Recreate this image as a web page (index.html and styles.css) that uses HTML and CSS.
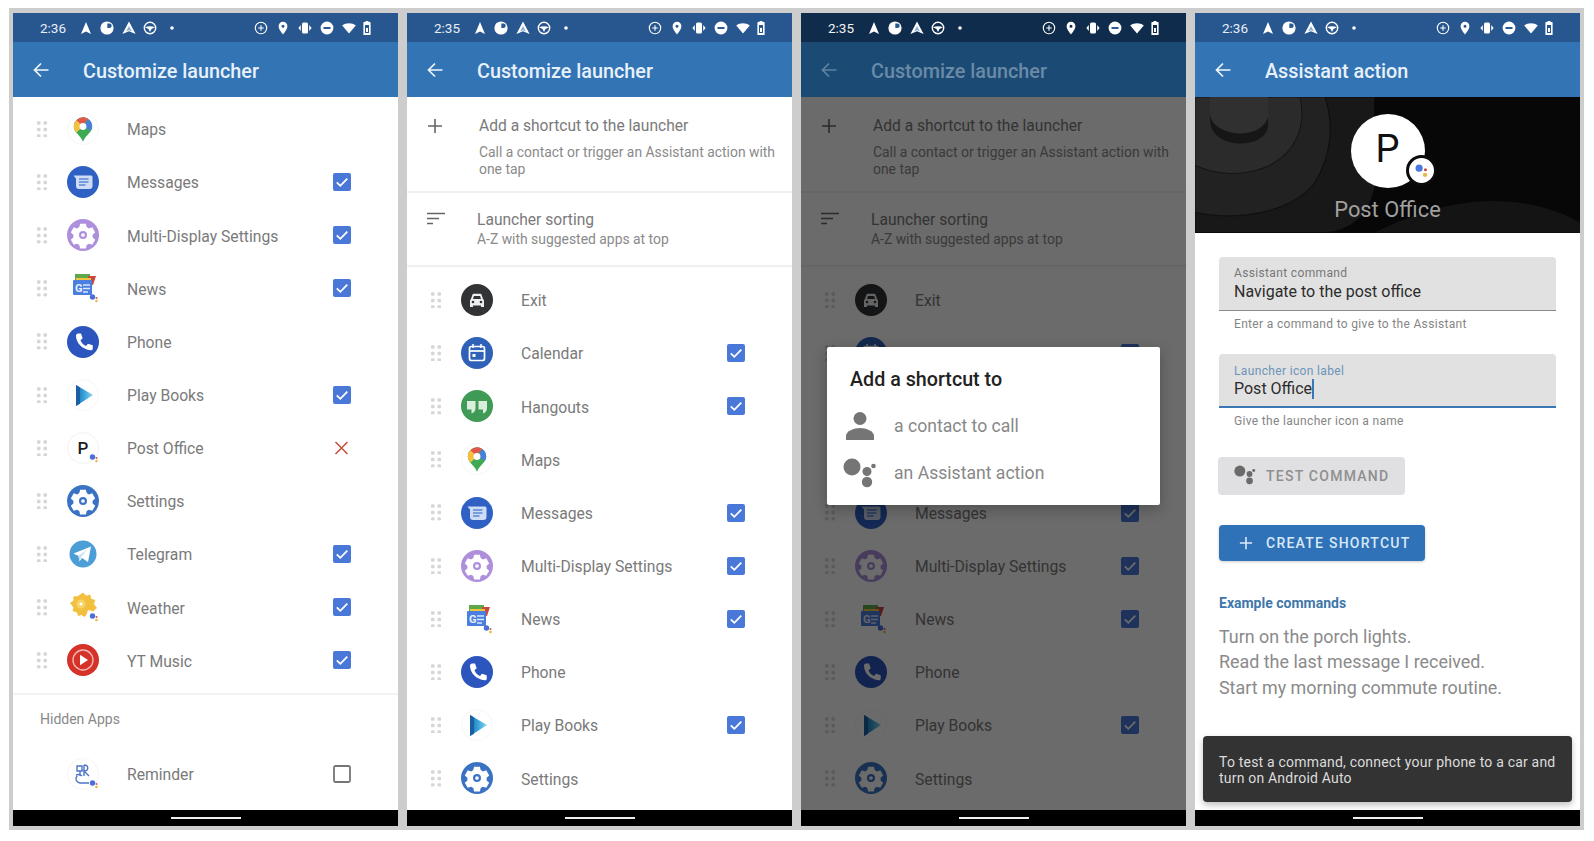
FILE: index.html
```html
<!DOCTYPE html>
<html lang="en">
<head>
<meta charset="utf-8">
<title>Customize launcher</title>
<link rel="stylesheet" href="styles.css">
</head>
<body>
<svg class="defs" aria-hidden="true">
  <defs>
    <linearGradient id="books" x1="0" x2="1" y1="0" y2="0"><stop offset="0" stop-color="#1f6fb0"/><stop offset=".45" stop-color="#35a0d8"/><stop offset="1" stop-color="#8ad8ee"/></linearGradient>
  </defs>
  <symbol id="s-nav" viewBox="0 0 14 14"><path d="M7 1l5 12-5-2.4L2 13z" fill="#fff"/></symbol>
  <symbol id="s-g" viewBox="0 0 14 14"><circle cx="7" cy="7" r="6.6" fill="#fff"/><path d="M7.3 2.6h2.2a2 2 0 0 1 0 4.4H7.3z" fill="#2a5a94"/></symbol>
  <symbol id="s-tri" viewBox="0 0 14 14"><path d="M7 .5l6.6 12.5L7 10.2.4 13z" fill="#fff"/><path d="M7 5l3 5.6L7 9.3l-3 1.3z" fill="#8fb0d2"/></symbol>
  <symbol id="s-wheel" viewBox="0 0 14 14"><circle cx="7" cy="7" r="5.7" fill="none" stroke="#fff" stroke-width="1.4"/><path d="M2 6.2c3-1.4 7-1.4 10 0L8.5 8 7 11 5.5 8z" fill="#fff"/></symbol>
  <symbol id="s-dot" viewBox="0 0 14 14"><circle cx="7" cy="7" r="1.8" fill="#fff"/></symbol>
  <symbol id="s-plusc" viewBox="0 0 14 14"><circle cx="7" cy="7" r="5.7" fill="none" stroke="#fff" stroke-width="1.1"/><path d="M7 4.2v5.6M4.2 7h5.6" stroke="#fff" stroke-width="1.1"/></symbol>
  <symbol id="s-pin" viewBox="0 0 14 14"><path fill-rule="evenodd" d="M7 .8a4.4 4.4 0 0 1 4.4 4.4C11.400 8.400 7 13.400 7 13.400S2.600 8.400 2.600 5.200A4.400 4.400 0 0 1 7 .8zM7 3.700a1.500 1.500 0 1 0 0 3 1.500 1.500 0 0 0 0-3z" fill="#fff"/></symbol>
  <symbol id="s-vib" viewBox="0 0 14 14"><rect x="4" y="1.500" width="6" height="11" rx="1.500" fill="#fff"/><path d="M2.800 4v6L.4 7zM11.200 4v6l2.400-3z" fill="#fff"/></symbol>
  <symbol id="s-dnd" viewBox="0 0 14 14"><circle cx="7" cy="7" r="6.400" fill="#fff"/><rect x="3.500" y="6" width="7" height="2" fill="#2a5a94"/></symbol>
  <symbol id="s-wifi" viewBox="0 0 14 14"><path d="M7 12.500L.2 4.600C4 1.500 10 1.500 13.800 4.600z" fill="#fff"/></symbol>
  <symbol id="s-bat" viewBox="0 0 8 14"><path fill-rule="evenodd" d="M2.500 1V0h3v1H7a.6.6 0 0 1 .6.600V13.400a.6.6 0 0 1-.6.600H1a.6.6 0 0 1-.6-.6V1.600A.6.6 0 0 1 1 1zM2 4v8h4V4z" fill="#fff"/><rect x="3" y="7" width="2" height="4" fill="#fff"/></symbol>

  <symbol id="back" viewBox="0 0 16 16"><path d="M15.500 8H2M8 1.500L1.500 8 8 14.500" fill="none" stroke="currentColor" stroke-width="1.700"/></symbol>
  <symbol id="handle" viewBox="0 0 10 16"><g fill="#d6d6d6"><rect x="0" y="0" width="3.500" height="3.500" rx="1"/><rect x="6.500" y="0" width="3.500" height="3.500" rx="1"/><rect x="0" y="6.500" width="3.500" height="3.500" rx="1"/><rect x="6.500" y="6.500" width="3.500" height="3.500" rx="1"/><rect x="0" y="13" width="3.500" height="3.500" rx="1"/><rect x="6.500" y="13" width="3.500" height="3.500" rx="1"/></g></symbol>
  <symbol id="check" viewBox="0 0 18 18"><rect width="18" height="18" rx="2" fill="#4a78d9"/><path d="M3.800 9.300l3.500 3.500 7-7.200" fill="none" stroke="#fff" stroke-width="1.800"/></symbol>
  <symbol id="cross" viewBox="0 0 18 18"><path d="M2.500 3l12 12M14.500 3l-12 12" stroke="#c4513f" stroke-width="1.600" fill="none"/></symbol>
  <symbol id="empty" viewBox="0 0 18 18"><rect x="1" y="1" width="16" height="16" rx="1.500" fill="none" stroke="#757575" stroke-width="1.800"/></symbol>
  <symbol id="badge" viewBox="0 0 32 32"><circle cx="25.500" cy="25" r="2.700" fill="#4a6fd8"/><circle cx="29.500" cy="26" r="1" fill="#d9533f"/><circle cx="29.500" cy="29" r="1.300" fill="#f1b63c"/></symbol>

  <symbol id="i-maps" viewBox="0 0 32 32"><circle cx="16" cy="16" r="16" fill="#fff"/><circle cx="16" cy="16" r="15.500" fill="none" stroke="#f6f6f6"/><g transform="translate(16 16.500) scale(1.080) translate(-16 -16.250)"><path d="M16 5a8.500 8.500 0 0 1 8.500 8.500c0 5.500-6 8-8.500 14-2.500-6-8.500-8.500-8.500-14A8.500 8.500 0 0 1 16 5z" fill="#3eaa56"/><path d="M9.900 7.600A8.500 8.500 0 0 1 16 5c1.800 0 3.500.6 4.900 1.600L10 17.500c-1.600-2-2.500-3-2.500-4A8 8 0 0 1 9.900 7.600z" fill="#e2574a"/><path d="M7.500 13.500c0-2 .8-4.200 2.400-5.900L16 13.500 10 19c-1.500-2-2.500-3.500-2.500-5.500z" fill="#f4c23c"/><path d="M20.900 6.600a8.500 8.500 0 0 1 3.600 6.900c0 1.500-.5 2.700-1.200 4L16 13.500z" fill="#4a7fd9"/><circle cx="16" cy="13.500" r="3.200" fill="#fff"/></g></symbol>
  <symbol id="i-messages" viewBox="0 0 32 32"><circle cx="16" cy="16" r="16" fill="#2f61c4"/><path d="M8 9.500h16a1.500 1.500 0 0 1 1.500 1.500v9a3 3 0 0 1-3 3H12a3 3 0 0 1-3-3v-7.500L6.800 10a.3.3 0 0 1 .2-.5z" fill="#cfdcf6"/><path d="M12 13h9.500M12 16h9.500M12 19h6.500" stroke="#5c86d6" stroke-width="1.300"/></symbol>
  <symbol id="gear" viewBox="0 0 32 32"><g transform="translate(16 16) scale(1.080) translate(-16 -16.500)"><path fill-rule="evenodd" d="M13.300 6h5.400l.7 3.200 2.100 1.200 3.100-1 2.700 4.700-2.400 2.200v2.400l2.400 2.200-2.700 4.700-3.100-1-2.100 1.200-.7 3.200h-5.400l-.7-3.200-2.100-1.200-3.100 1-2.700-4.700 2.400-2.200v-2.400l-2.400-2.200 2.700-4.700 3.100 1 2.100-1.200zM16 12.800a3.700 3.700 0 1 0 0 7.400 3.700 3.700 0 0 0 0-7.400z" fill="#fff"/><circle cx="16" cy="16.500" r="1.700" fill="#fff"/></g></symbol>
  <symbol id="i-news" viewBox="0 0 32 32"><circle cx="16" cy="16" r="16" fill="#fff"/><rect x="8" y="2" width="15" height="9" fill="#5fa84a"/><path d="M21 4h8l-3 9h-5z" fill="#c9473d"/><path d="M9 6h15v4H9z" fill="#f2c33f"/><rect x="6" y="8" width="19" height="15" rx="1" fill="#4a7fe0"/><path d="M16 13h7M16 16.500h7M16 20h5" stroke="#dbe6fa" stroke-width="1.300"/></symbol>
  <symbol id="i-phone" viewBox="0 0 32 32"><circle cx="16" cy="16" r="16" fill="#2c55bd"/><path d="M11 7.500l3 .1 1.700 4.700-2.200 1.900c.8 2.500 2.900 4.700 5.500 5.700l2-2.200 4.700 1.600.1 3.200c0 1-1 1.900-2 1.800C15 23.500 9 17 9 9.600c0-1.100 1-2.100 2-2.100z" fill="#fff"/></symbol>
  <symbol id="i-books" viewBox="0 0 32 32"><circle cx="16" cy="16" r="16" fill="#fff"/><circle cx="16" cy="16" r="15.500" fill="none" stroke="#f6f6f6"/><path d="M9 6l17 10L9 27z" fill="url(#books)"/><path d="M9 6l4 2.400v16.300L9 27z" fill="#1b5fa3"/></symbol>
  <symbol id="i-post" viewBox="0 0 32 32"><circle cx="16" cy="16" r="16" fill="#fff"/><circle cx="16" cy="16" r="15.500" fill="none" stroke="#f2f2f2"/></symbol>
  <symbol id="i-telegram" viewBox="0 0 32 32"><circle cx="16" cy="16" r="16" fill="#fff"/><circle cx="16" cy="16" r="13.500" fill="#4b9ed6"/><path d="M6.500 15.500L24 8.500 21 24l-6-4-2.500 3.500-1-5.500z" fill="#fff"/><path d="M11.500 18L20 11.500 14 19l-1.500 4.500z" fill="#c4dff2"/></symbol>
  <symbol id="i-weather" viewBox="0 0 32 32"><circle cx="16" cy="16" r="16" fill="#fff"/><path d="M16 1.500l3 3.200 4.200-1.100 1 4.200 4 1.300-1.200 4.100L30 17l-3 2.400-.5 3-6 .5-3 3-3-1.800-3.500 1-1-3.600-4.500-1.400 1-3.700L3 12l3.500-2.500-.2-4 4.400-.3z" fill="#f2bf3e"/><circle cx="14" cy="13" r="4.500" fill="#f7d569"/><circle cx="14" cy="13" r="1.500" fill="#fff"/><path d="M21 19l8 2-2 9-9-2z" fill="#fff"/></symbol>
  <symbol id="i-yt" viewBox="0 0 32 32"><circle cx="16" cy="16" r="16" fill="#d5332a"/><circle cx="16" cy="16" r="10" fill="none" stroke="#f4b8b3" stroke-width="1.400"/><path d="M13 10.800l8 5.200-8 5.200z" fill="#fff"/></symbol>
  <symbol id="i-reminder" viewBox="0 0 32 32"><circle cx="16" cy="16" r="16" fill="#fff"/><circle cx="16" cy="16" r="15.500" fill="none" stroke="#f4f4f4"/><path d="M10 8h5v5h-5zM17 7c5 0 5 6 0 6l5 5M17 7v11M9 17c3-1 5 0 6 1M10 18c-2 3-1 6 3 7h9M13 13v5" fill="none" stroke="#4f74c8" stroke-width="1.400"/></symbol>
  <symbol id="i-exit" viewBox="0 0 32 32"><circle cx="16" cy="16" r="16" fill="#313335"/><path d="M10 15l1.400-4.300c.2-.6.700-.9 1.300-.9h6.600c.6 0 1.100.3 1.300.9L22 15a2 2 0 0 1 1 1.700V23h-3v-1.500h-8V23H9v-6.300A2 2 0 0 1 10 15z" fill="#eee"/><path d="M12 15l.9-3h6.200l.9 3z" fill="#313335"/><circle cx="12" cy="18" r="1.300" fill="#313335"/><circle cx="20" cy="18" r="1.300" fill="#313335"/></symbol>
  <symbol id="i-calendar" viewBox="0 0 32 32"><circle cx="16" cy="16" r="16" fill="#2f61b8"/><rect x="8.500" y="9.500" width="15" height="14" rx="2" fill="none" stroke="#fff" stroke-width="1.700"/><path d="M8.500 14h15" stroke="#fff" stroke-width="1.700"/><path d="M12 7v4M20 7v4" stroke="#fff" stroke-width="1.500"/><rect x="11.500" y="17" width="3" height="3" fill="#fff"/></symbol>
  <symbol id="i-hangouts" viewBox="0 0 32 32"><circle cx="16" cy="16" r="16" fill="#3f9a55"/><path d="M6 11h8.500v7c0 3-1.700 5-4 5.500v-4H6zM17.500 11H26v7c0 3-1.700 5-4 5.500v-4h-4.500z" fill="#d9eedd"/></symbol>
  <symbol id="assist" viewBox="0 0 34 30"><circle cx="9" cy="9" r="8.500" fill="currentColor"/><circle cx="24" cy="13.500" r="4.500" fill="currentColor"/><circle cx="30.500" cy="8" r="2.300" fill="currentColor"/><circle cx="24" cy="24" r="5.200" fill="currentColor"/></symbol>
</svg>

<main class="frame">

  <section class="phone">
    <div class="status">
      <span class="time">2:36</span>
      <svg class="si"><use href="#s-nav"/></svg><svg class="si"><use href="#s-g"/></svg><svg class="si"><use href="#s-tri"/></svg><svg class="si"><use href="#s-wheel"/></svg><svg class="si"><use href="#s-dot"/></svg>
      <svg class="si push"><use href="#s-plusc"/></svg><svg class="si"><use href="#s-pin"/></svg><svg class="si"><use href="#s-vib"/></svg><svg class="si"><use href="#s-dnd"/></svg><svg class="si"><use href="#s-wifi"/></svg><svg class="si-bat"><use href="#s-bat"/></svg>
    </div>
    <header class="appbar"><svg class="back"><use href="#back"/></svg><h1>Customize launcher</h1></header>
    <div class="content">
      <ul class="list">
        <li class="row"><svg class="handle"><use href="#handle"/></svg><svg class="app"><use href="#i-maps"/></svg><span class="label">Maps</span></li>
        <li class="row"><svg class="handle"><use href="#handle"/></svg><svg class="app"><use href="#i-messages"/></svg><span class="label">Messages</span><svg class="box"><use href="#check"/></svg></li>
        <li class="row"><svg class="handle"><use href="#handle"/></svg><svg class="app multi"><circle cx="16" cy="16" r="16"/><use href="#gear"/></svg><span class="label">Multi-Display Settings</span><svg class="box"><use href="#check"/></svg></li>
        <li class="row"><svg class="handle"><use href="#handle"/></svg><svg class="app"><use href="#i-news"/><text class="news-g" x="8" y="20">G</text><use href="#badge"/></svg><span class="label">News</span><svg class="box"><use href="#check"/></svg></li>
        <li class="row"><svg class="handle"><use href="#handle"/></svg><svg class="app"><use href="#i-phone"/></svg><span class="label">Phone</span></li>
        <li class="row"><svg class="handle"><use href="#handle"/></svg><svg class="app"><use href="#i-books"/></svg><span class="label">Play Books</span><svg class="box"><use href="#check"/></svg></li>
        <li class="row"><svg class="handle"><use href="#handle"/></svg><svg class="app"><use href="#i-post"/><text class="post-p" x="16" y="22" text-anchor="middle">P</text><use href="#badge"/></svg><span class="label">Post Office</span><svg class="box"><use href="#cross"/></svg></li>
        <li class="row"><svg class="handle"><use href="#handle"/></svg><svg class="app settings"><circle cx="16" cy="16" r="16"/><use href="#gear"/></svg><span class="label">Settings</span></li>
        <li class="row"><svg class="handle"><use href="#handle"/></svg><svg class="app"><use href="#i-telegram"/></svg><span class="label">Telegram</span><svg class="box"><use href="#check"/></svg></li>
        <li class="row"><svg class="handle"><use href="#handle"/></svg><svg class="app"><use href="#i-weather"/><use href="#badge"/></svg><span class="label">Weather</span><svg class="box"><use href="#check"/></svg></li>
        <li class="row"><svg class="handle"><use href="#handle"/></svg><svg class="app"><use href="#i-yt"/></svg><span class="label">YT Music</span><svg class="box"><use href="#check"/></svg></li>
      </ul>
      <div class="hidden-apps">
        <h2>Hidden Apps</h2>
        <div class="row row-nohandle"><svg class="app"><use href="#i-reminder"/><use href="#badge"/></svg><span class="label">Reminder</span><svg class="box"><use href="#empty"/></svg></div>
      </div>
    </div>
    <footer class="navbar"><span class="pill"></span></footer>
  </section>

  <section class="phone">
    <div class="status">
      <span class="time">2:35</span>
      <svg class="si"><use href="#s-nav"/></svg><svg class="si"><use href="#s-g"/></svg><svg class="si"><use href="#s-tri"/></svg><svg class="si"><use href="#s-wheel"/></svg><svg class="si"><use href="#s-dot"/></svg>
      <svg class="si push"><use href="#s-plusc"/></svg><svg class="si"><use href="#s-pin"/></svg><svg class="si"><use href="#s-vib"/></svg><svg class="si"><use href="#s-dnd"/></svg><svg class="si"><use href="#s-wifi"/></svg><svg class="si-bat"><use href="#s-bat"/></svg>
    </div>
    <header class="appbar"><svg class="back"><use href="#back"/></svg><h1>Customize launcher</h1></header>
    <div class="content">
      <div class="action action-add">
        <svg class="action-icon" viewBox="0 0 16 16"><path d="M8 1v14M1 8h14" stroke="#666" stroke-width="1.600"/></svg>
        <div class="action-text">
          <div class="action-title">Add a shortcut to the launcher</div>
          <div class="action-sub">Call a contact or trigger an Assistant action with one tap</div>
        </div>
      </div>
      <div class="action action-sort">
        <svg class="action-icon" viewBox="0 0 18 14"><path d="M0 1.500h18M0 6.500h12M0 11.500h6" stroke="#666" stroke-width="1.700"/></svg>
        <div class="action-text">
          <div class="action-title">Launcher sorting</div>
          <div class="action-sub">A-Z with suggested apps at top</div>
        </div>
      </div>
      <ul class="list">
        <li class="row"><svg class="handle"><use href="#handle"/></svg><svg class="app"><use href="#i-exit"/></svg><span class="label">Exit</span></li>
        <li class="row"><svg class="handle"><use href="#handle"/></svg><svg class="app"><use href="#i-calendar"/></svg><span class="label">Calendar</span><svg class="box"><use href="#check"/></svg></li>
        <li class="row"><svg class="handle"><use href="#handle"/></svg><svg class="app"><use href="#i-hangouts"/></svg><span class="label">Hangouts</span><svg class="box"><use href="#check"/></svg></li>
        <li class="row"><svg class="handle"><use href="#handle"/></svg><svg class="app"><use href="#i-maps"/></svg><span class="label">Maps</span></li>
        <li class="row"><svg class="handle"><use href="#handle"/></svg><svg class="app"><use href="#i-messages"/></svg><span class="label">Messages</span><svg class="box"><use href="#check"/></svg></li>
        <li class="row"><svg class="handle"><use href="#handle"/></svg><svg class="app multi"><circle cx="16" cy="16" r="16"/><use href="#gear"/></svg><span class="label">Multi-Display Settings</span><svg class="box"><use href="#check"/></svg></li>
        <li class="row"><svg class="handle"><use href="#handle"/></svg><svg class="app"><use href="#i-news"/><text class="news-g" x="8" y="20">G</text><use href="#badge"/></svg><span class="label">News</span><svg class="box"><use href="#check"/></svg></li>
        <li class="row"><svg class="handle"><use href="#handle"/></svg><svg class="app"><use href="#i-phone"/></svg><span class="label">Phone</span></li>
        <li class="row"><svg class="handle"><use href="#handle"/></svg><svg class="app"><use href="#i-books"/></svg><span class="label">Play Books</span><svg class="box"><use href="#check"/></svg></li>
        <li class="row"><svg class="handle"><use href="#handle"/></svg><svg class="app settings"><circle cx="16" cy="16" r="16"/><use href="#gear"/></svg><span class="label">Settings</span></li>
      </ul>
    </div>
    <footer class="navbar"><span class="pill"></span></footer>
  </section>

  <section class="phone phone-dim">
    <div class="status">
      <span class="time">2:35</span>
      <svg class="si"><use href="#s-nav"/></svg><svg class="si"><use href="#s-g"/></svg><svg class="si"><use href="#s-tri"/></svg><svg class="si"><use href="#s-wheel"/></svg><svg class="si"><use href="#s-dot"/></svg>
      <svg class="si push"><use href="#s-plusc"/></svg><svg class="si"><use href="#s-pin"/></svg><svg class="si"><use href="#s-vib"/></svg><svg class="si"><use href="#s-dnd"/></svg><svg class="si"><use href="#s-wifi"/></svg><svg class="si-bat"><use href="#s-bat"/></svg>
    </div>
    <header class="appbar"><svg class="back"><use href="#back"/></svg><h1>Customize launcher</h1></header>
    <div class="content">
      <div class="action action-add">
        <svg class="action-icon" viewBox="0 0 16 16"><path d="M8 1v14M1 8h14" stroke="#666" stroke-width="1.600"/></svg>
        <div class="action-text">
          <div class="action-title">Add a shortcut to the launcher</div>
          <div class="action-sub">Call a contact or trigger an Assistant action with one tap</div>
        </div>
      </div>
      <div class="action action-sort">
        <svg class="action-icon" viewBox="0 0 18 14"><path d="M0 1.500h18M0 6.500h12M0 11.500h6" stroke="#666" stroke-width="1.700"/></svg>
        <div class="action-text">
          <div class="action-title">Launcher sorting</div>
          <div class="action-sub">A-Z with suggested apps at top</div>
        </div>
      </div>
      <ul class="list">
        <li class="row"><svg class="handle"><use href="#handle"/></svg><svg class="app"><use href="#i-exit"/></svg><span class="label">Exit</span></li>
        <li class="row"><svg class="handle"><use href="#handle"/></svg><svg class="app"><use href="#i-calendar"/></svg><svg class="box"><use href="#check"/></svg></li>
        <li class="row"></li>
        <li class="row"></li>
        <li class="row"><svg class="handle"><use href="#handle"/></svg><svg class="app"><use href="#i-messages"/></svg><span class="label">Messages</span><svg class="box"><use href="#check"/></svg></li>
        <li class="row"><svg class="handle"><use href="#handle"/></svg><svg class="app multi"><circle cx="16" cy="16" r="16"/><use href="#gear"/></svg><span class="label">Multi-Display Settings</span><svg class="box"><use href="#check"/></svg></li>
        <li class="row"><svg class="handle"><use href="#handle"/></svg><svg class="app"><use href="#i-news"/><text class="news-g" x="8" y="20">G</text><use href="#badge"/></svg><span class="label">News</span><svg class="box"><use href="#check"/></svg></li>
        <li class="row"><svg class="handle"><use href="#handle"/></svg><svg class="app"><use href="#i-phone"/></svg><span class="label">Phone</span></li>
        <li class="row"><svg class="handle"><use href="#handle"/></svg><svg class="app"><use href="#i-books"/></svg><span class="label">Play Books</span><svg class="box"><use href="#check"/></svg></li>
        <li class="row"><svg class="handle"><use href="#handle"/></svg><svg class="app settings"><circle cx="16" cy="16" r="16"/><use href="#gear"/></svg><span class="label">Settings</span></li>
      </ul>
      <div class="scrim"></div>
      <div class="dialog">
        <h2>Add a shortcut to</h2>
        <div class="dialog-row">
          <svg class="dialog-icon" viewBox="0 0 34 30"><circle cx="17" cy="7.500" r="6.500" fill="#757575"/><path d="M3 29v-4c0-5 8-8 14-8s14 3 14 8v4z" fill="#757575"/></svg>
          <span>a contact to call</span>
        </div>
        <div class="dialog-row">
          <svg class="dialog-icon"><use href="#assist"/></svg>
          <span>an Assistant action</span>
        </div>
      </div>
    </div>
    <footer class="navbar"><span class="pill"></span></footer>
  </section>

  <section class="phone">
    <div class="status">
      <span class="time">2:36</span>
      <svg class="si"><use href="#s-nav"/></svg><svg class="si"><use href="#s-g"/></svg><svg class="si"><use href="#s-tri"/></svg><svg class="si"><use href="#s-wheel"/></svg><svg class="si"><use href="#s-dot"/></svg>
      <svg class="si push"><use href="#s-plusc"/></svg><svg class="si"><use href="#s-pin"/></svg><svg class="si"><use href="#s-vib"/></svg><svg class="si"><use href="#s-dnd"/></svg><svg class="si"><use href="#s-wifi"/></svg><svg class="si-bat"><use href="#s-bat"/></svg>
    </div>
    <header class="appbar"><svg class="back"><use href="#back"/></svg><h1>Assistant action</h1></header>
    <div class="content">
      <div class="hero">
        <svg class="hero-art" viewBox="0 0 385 135" preserveAspectRatio="none">
          <path d="M0 0H180C176 40 190 70 175 105C170 120 150 135 130 135H0z" fill="#181818" stroke="#0a0a0a"/>
          <path d="M0 0H130C140 30 135 60 120 85C100 112 50 125 0 115z" fill="#222" stroke="#0e0e0e"/>
          <path d="M0 0H105C112 30 100 55 75 68C50 80 20 78 0 68z" fill="#2b2b2b" stroke="#141414"/>
          <path d="M15 0H73V28C73 42 55 48 40 46C25 44 15 36 15 22z" fill="#161616"/>
          <path d="M15 0H73V20C70 32 55 38 40 36C25 34 15 26 15 16z" fill="#303030"/>
          <path d="M180 135C260 95 330 95 385 125V135z" fill="#141414"/>
        </svg>
        <div class="avatar">P
          <span class="avatar-badge"><svg viewBox="0 0 24 24"><circle cx="9" cy="9" r="4.500" fill="#4a78e0"/><circle cx="17" cy="11" r="2" fill="#c9503f"/><circle cx="16.500" cy="17.500" r="2.800" fill="#eab94c"/></svg></span>
        </div>
        <div class="hero-name">Post Office</div>
      </div>
      <form class="form">
        <div class="field">
          <div class="field-label">Assistant command</div>
          <div class="field-value">Navigate to the post office</div>
        </div>
        <p class="helper">Enter a command to give to the Assistant</p>
        <div class="field field-focus">
          <div class="field-label">Launcher icon label</div>
          <div class="field-value"><span class="caret">Post Office</span></div>
        </div>
        <p class="helper">Give the launcher icon a name</p>
        <button type="button" class="btn btn-test"><svg class="btn-assist"><use href="#assist"/></svg>TEST COMMAND</button>
        <button type="button" class="btn btn-create"><svg class="btn-plus" viewBox="0 0 16 16"><path d="M8 1v14M1 8h14" stroke="#dcebf8" stroke-width="1.800"/></svg>CREATE SHORTCUT</button>
        <h3 class="examples-title">Example commands</h3>
        <p class="examples">Turn on the porch lights.<br>Read the last message I received.<br>Start my morning commute routine.</p>
      </form>
      <div class="snackbar">To test a command, connect your phone to a car and turn on Android Auto</div>
    </div>
    <footer class="navbar"><span class="pill"></span></footer>
  </section>

</main>
</body>
</html>
```
FILE: styles.css
```css
* { box-sizing: border-box; }
html, body { margin: 0; padding: 0; background: #fff; }
body { font-family: Roboto, "Liberation Sans", sans-serif; overflow: hidden; height: 841px; }
h1, h2, h3, p, ul { margin: 0; padding: 0; list-style: none; }

.defs { position: absolute; width: 0; height: 0; }

.frame {
  display: flex;
  gap: 9px;
  width: 1575px;
  height: 822px;
  margin: 8px 0 0 9px;
  padding: 5px 0 4px 4px;
  background: #cdcdcd;
}
.phone {
  display: flex;
  flex-direction: column;
  width: 385px;
  height: 813px;
  background: #fff;
}

.status {
  display: flex;
  align-items: center;
  gap: 7.5px;
  flex: none;
  height: 29px;
  padding: 0 27px 0 27px;
  background: #28578f;
  color: #e9eef5;
}
.time { font-size: 13.5px; width: 26px; margin-right: 5px; }
.si { width: 14px; height: 14px; flex: none; }
.si-bat { width: 8px; height: 14px; flex: none; }
.si.push { margin-left: auto; }
.si.push ~ .si { margin-left: .5px; }

.appbar {
  display: flex;
  align-items: center;
  flex: none;
  height: 55px;
  padding: 1px 0 0 20px;
  background: #3374b5;
  color: #f0f6fb;
}
.appbar h1 { font-size: 19.8px; font-weight: 500; margin: 2px 0 0 34px; color: #e8f1f9; }
.back { width: 16px; height: 16px; flex: none; color: #f0f6fb; }

.content { position: relative; flex: 1; min-height: 0; overflow: hidden; background: #fff; }

.list { padding-top: 5.5px; }
.action + .list { padding-top: 6.5px; }
.row {
  display: flex;
  align-items: center;
  height: 53.15px;
  padding: 0 47px 0 24px;
}
.row-nohandle { padding-left: 54px; }
.handle { width: 10px; height: 16.500px; flex: none; margin-right: 20px; }
.app { width: 32px; height: 32px; flex: none; margin-right: 28px; overflow: visible; }
.app.multi { fill: #ad8fdc; }
.app.settings { fill: #3b73c4; }
.label { font-size: 15.7px; color: #7a7a7a; margin-top: 1.5px; }
.box { width: 18px; height: 18px; flex: none; margin-left: auto; }

.news-g { font: 700 11px Roboto, sans-serif; fill: #e6eefb; }
.post-p { font: 500 17px Roboto, sans-serif; fill: #1c1c1c; }

.hidden-apps { margin-top: 6px; border-top: 2px solid #f2f2f2; }
.hidden-apps h2 { font-size: 14px; font-weight: 400; color: #888; line-height: 18px; padding: 15px 0 0 27px; margin-bottom: 19px; }

.action { display: flex; align-items: flex-start; border-bottom: 2px solid #f0f0f0; }
.action-add { height: 96px; padding: 19px 0 0 20px; }
.action-add .action-icon { width: 16px; height: 16px; margin: 2px 36px 0 0; flex: none; }
.action-sort { height: 74px; padding: 17px 0 0 20px; }
.action-sort .action-icon { width: 18px; height: 14px; margin: 2px 32px 0 0; flex: none; }
.action-title { font-size: 15.6px; line-height: 20px; color: #7a7a7a; }
.action-sub { font-size: 13.9px; color: #8a8a8a; }
.action-add .action-sub { line-height: 16.500px; margin-top: 8px; }
.action-sort .action-sub { line-height: 18px; margin-top: 0; }

.phone-dim .status { background: #0f2c4c; }
.phone-dim .time { color: #f3f3f3; }
.phone-dim .appbar { background: #1b4a75; }
.phone-dim .appbar h1 { color: #6a8aa6; }
.phone-dim .back { color: #5f83a3; }
.scrim { position: absolute; inset: 0; background: rgba(0, 0, 0, .58); }
.dialog {
  position: absolute;
  left: 26px;
  top: 250px;
  width: 333px;
  height: 158px;
  padding: 20px 0 0 16px;
  background: #fff;
  border-radius: 2px;
  box-shadow: 0 4px 14px rgba(0, 0, 0, .25);
}
.dialog h2 { font-size: 19.7px; font-weight: 500; line-height: 26px; color: #222; margin: 0 0 9px 7px; }
.dialog-row { display: flex; align-items: center; height: 47px; font-size: 17.6px; color: #888; }
.dialog-icon { width: 34px; height: 30px; flex: none; margin-right: 17px; color: #757575; }

.hero { position: relative; height: 135.5px; background: #070707; overflow: hidden; text-align: center; }
.hero-art { position: absolute; inset: 0; width: 100%; height: 100%; }
.avatar {
  position: relative;
  width: 74px;
  height: 74px;
  margin: 17px auto 0;
  border-radius: 50%;
  background: #fff;
  color: #111;
  font-size: 38px;
  line-height: 70px;
}
.avatar-badge {
  position: absolute;
  left: 55px;
  top: 41px;
  display: flex;
  width: 31px;
  height: 31px;
  padding: 3px;
  border: 3px solid #0b0b0b;
  border-radius: 50%;
  background: #fff;
}
.avatar-badge svg { width: 100%; height: 100%; }
.hero-name { position: relative; margin-top: 8px; font-size: 21.8px; line-height: 28px; color: #a0a0a0; }

.form { padding: 24.500px 24px 0; }
.field {
  height: 54px;
  padding: 9px 15px 0;
  background: #e1e1e1;
  border-bottom: 1px solid #8a8a8a;
  border-radius: 4px 4px 0 0;
}
.field-label { font-size: 12px; line-height: 14px; color: #777; letter-spacing: .35px; }
.field-value { font-size: 16px; line-height: 21px; color: #2c2c2c; margin-top: 1px; }
.field-focus { border-bottom: 2px solid #3a78b5; padding-top: 10px; }
.field-focus .field-label { color: #6d93b8; }
.field-focus .field-value { margin-top: 0; }
.caret { border-right: 2px solid #3a78b5; display: inline-block; line-height: 20px; }
.helper { font-size: 12px; line-height: 16px; color: #858585; letter-spacing: .33px; padding: 5px 15px 0; height: 43px; }

.btn {
  display: flex;
  align-items: center;
  border: 0;
  border-radius: 4px;
  font-family: Roboto, sans-serif;
  font-size: 14px;
  font-weight: 500;
  letter-spacing: 1.250px;
}
.btn-test { width: 187px; height: 38px; padding: 0 0 0 16px; margin: 6px 0 0 -1px; background: #e0e0e2; color: #8f8f8f; }
.btn-assist { width: 22px; height: 20px; margin: -3px 10px 0 0; color: #6a6a6a; flex: none; }
.btn-create { width: 206px; height: 36px; padding: 0 0 0 20px; margin-top: 30px; background: #2f72b8; color: #d8e8f6; box-shadow: 0 1px 3px rgba(0, 0, 0, .2); }
.btn-plus { width: 14px; height: 14px; margin-right: 13px; flex: none; }

.examples-title { font-size: 14px; font-weight: 700; line-height: 18px; color: #4077aa; margin-top: 33px; }
.examples { font-size: 17.9px; line-height: 25.300px; color: #8a8a8a; margin-top: 12px; }

.snackbar {
  position: absolute;
  left: 8px;
  top: 639px;
  width: 369px;
  height: 66px;
  padding: 18px 8px 0 16px;
  border-radius: 4px;
  background: #333;
  color: #dcdcdc;
  font-size: 14px;
  line-height: 16px;
  letter-spacing: .2px;
  box-shadow: 0 3px 6px rgba(0, 0, 0, .25);
}

.navbar { display: flex; align-items: center; justify-content: center; flex: none; height: 16px; background: #000; }
.pill { display: block; width: 70px; height: 2px; background: #eee; }
```
